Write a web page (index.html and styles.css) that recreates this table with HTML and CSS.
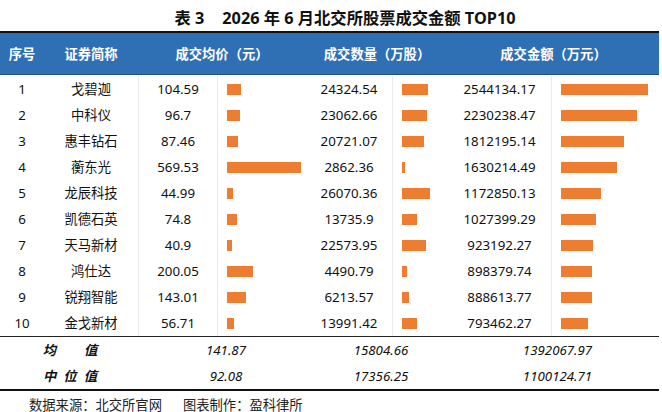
FILE: index.html
```html
<!DOCTYPE html>
<html lang="zh-CN">
<head>
<meta charset="utf-8">
<title>表3 2026年6月北交所股票成交金额TOP10</title>
<link rel="stylesheet" href="styles.css">
</head>
<body>
<div class="page">
  <h1 class="title"><span>表 3</span><span>2026 年 6 月北交所股票成交金额 TOP10</span></h1>
  <div class="table">
    <div class="row head">
      <div class="c">序号</div>
      <div class="c">证券简称</div>
      <div class="c span2">成交均价（元）</div>
      <div class="c span2">成交数量（万股）</div>
      <div class="c span2">成交金额（万元）</div>
    </div>
    <div class="body">
      <div class="row data"><div class="c">1</div><div class="c">戈碧迦</div><div class="c v1">104.59</div><div class="b"><i style="width:13.6px"></i></div><div class="c">24324.54</div><div class="b"><i style="width:26px"></i></div><div class="c">2544134.17</div><div class="b"><i style="width:87px"></i></div></div>
      <div class="row data"><div class="c">2</div><div class="c">中科仪</div><div class="c v1">96.7</div><div class="b"><i style="width:12.6px"></i></div><div class="c">23062.66</div><div class="b"><i style="width:24.7px"></i></div><div class="c">2230238.47</div><div class="b"><i style="width:76.3px"></i></div></div>
      <div class="row data"><div class="c">3</div><div class="c">惠丰钻石</div><div class="c v1">87.46</div><div class="b"><i style="width:11.4px"></i></div><div class="c">20721.07</div><div class="b"><i style="width:22.2px"></i></div><div class="c">1812195.14</div><div class="b"><i style="width:62.5px"></i></div></div>
      <div class="row data"><div class="c">4</div><div class="c">蘅东光</div><div class="c v1">569.53</div><div class="b"><i style="width:74px"></i></div><div class="c">2862.36</div><div class="b"><i style="width:3.2px"></i></div><div class="c">1630214.49</div><div class="b"><i style="width:56.2px"></i></div></div>
      <div class="row data"><div class="c">5</div><div class="c">龙辰科技</div><div class="c v1">44.99</div><div class="b"><i style="width:5.8px"></i></div><div class="c">26070.36</div><div class="b"><i style="width:27.9px"></i></div><div class="c">1172850.13</div><div class="b"><i style="width:40.4px"></i></div></div>
      <div class="row data"><div class="c">6</div><div class="c">凯德石英</div><div class="c v1">74.8</div><div class="b"><i style="width:9.7px"></i></div><div class="c">13735.9</div><div class="b"><i style="width:14.7px"></i></div><div class="c">1027399.29</div><div class="b"><i style="width:35.4px"></i></div></div>
      <div class="row data"><div class="c">7</div><div class="c">天马新材</div><div class="c v1">40.9</div><div class="b"><i style="width:5.3px"></i></div><div class="c">22573.95</div><div class="b"><i style="width:24.2px"></i></div><div class="c">923192.27</div><div class="b"><i style="width:31.8px"></i></div></div>
      <div class="row data"><div class="c">8</div><div class="c">鸿仕达</div><div class="c v1">200.05</div><div class="b"><i style="width:26px"></i></div><div class="c">4490.79</div><div class="b"><i style="width:4.8px"></i></div><div class="c">898379.74</div><div class="b"><i style="width:31px"></i></div></div>
      <div class="row data"><div class="c">9</div><div class="c">锐翔智能</div><div class="c v1">143.01</div><div class="b"><i style="width:18.6px"></i></div><div class="c">6213.57</div><div class="b"><i style="width:6.6px"></i></div><div class="c">888613.77</div><div class="b"><i style="width:30.6px"></i></div></div>
      <div class="row data"><div class="c">10</div><div class="c">金戈新材</div><div class="c v1">56.71</div><div class="b"><i style="width:7.4px"></i></div><div class="c">13991.42</div><div class="b"><i style="width:15px"></i></div><div class="c">793462.27</div><div class="b"><i style="width:27.4px"></i></div></div>
    </div>
    <div class="summary">
      <div class="row sum"><div class="c span2 lab"><span>均</span><span class="gap">值</span></div><div class="c span2">141.87</div><div class="c span2">15804.66</div><div class="c span2">1392067.97</div></div>
      <div class="row sum"><div class="c span2 lab spaced">中位值</div><div class="c span2">92.08</div><div class="c span2">17356.25</div><div class="c span2">1100124.71</div></div>
    </div>
  </div>
  <p class="note"><span>数据来源：北交所官网</span><span>图表制作：盈科律所</span></p>
</div>
</body>
</html>
```
FILE: styles.css
```css
html, body {
  margin: 0;
  padding: 0;
  background: #ffffff;
}
body {
  font-family: "Noto Sans", "Noto Sans CJK SC", sans-serif;
  color: #111111;
}
.page {
  width: 662px;
  height: 412px;
  overflow: hidden;
}
.title {
  margin: 0;
  height: 31px;
  display: flex;
  justify-content: center;
  align-items: center;
  gap: 18px;
  padding-left: 28px;
  padding-top: 2px;
  box-sizing: border-box;
  font-size: 16.3px;
  font-weight: 700;
  color: #111;
}
.table {
  width: 659px;
  border-top: 2.5px solid #111;
  border-bottom: 2.5px solid #111;
}
.row {
  display: grid;
  grid-template-columns: 44px 94px 79px 89px 86px 56px 103px 108px;
}
.c {
  display: flex;
  align-items: center;
  justify-content: center;
  white-space: nowrap;
}
.span2 {
  grid-column: span 2;
}
.head {
  height: 41px;
  background: #2f6fb4;
  border-bottom: 1px solid #22507f;
  color: #ffffff;
  font-weight: 700;
  font-size: 13.3px;
}
.body {
  padding-top: 1px;
  border-bottom: 1px solid #222;
}
.data {
  height: 26px;
  font-size: 13.3px;
  line-height: 16px;
}
.data > :nth-child(3),
.data > :nth-child(4),
.data > :nth-child(6),
.data > :nth-child(8) {
  border-left: 1px solid #ebebeb;
}
.b {
  display: flex;
  align-items: center;
  padding-left: 9px;
}
.b i {
  display: block;
  height: 11px;
  background: #ed7d31;
}
.sum {
  height: 26px;
  font-size: 13.3px;
  line-height: 16px;
  font-style: italic;
}
.sum > :nth-child(n+2) {
  padding-left: 8px;
}
.lab {
  font-weight: 700;
  padding-left: 2px;
}
.lab .gap {
  margin-left: 28px;
}
.spaced {
  letter-spacing: 7px;
  padding-left: 9px;
}
.note {
  margin: 6px 0 0 29px;
  font-size: 13.3px;
  line-height: 16px;
  color: #222;
  display: flex;
  gap: 21px;
}
```
